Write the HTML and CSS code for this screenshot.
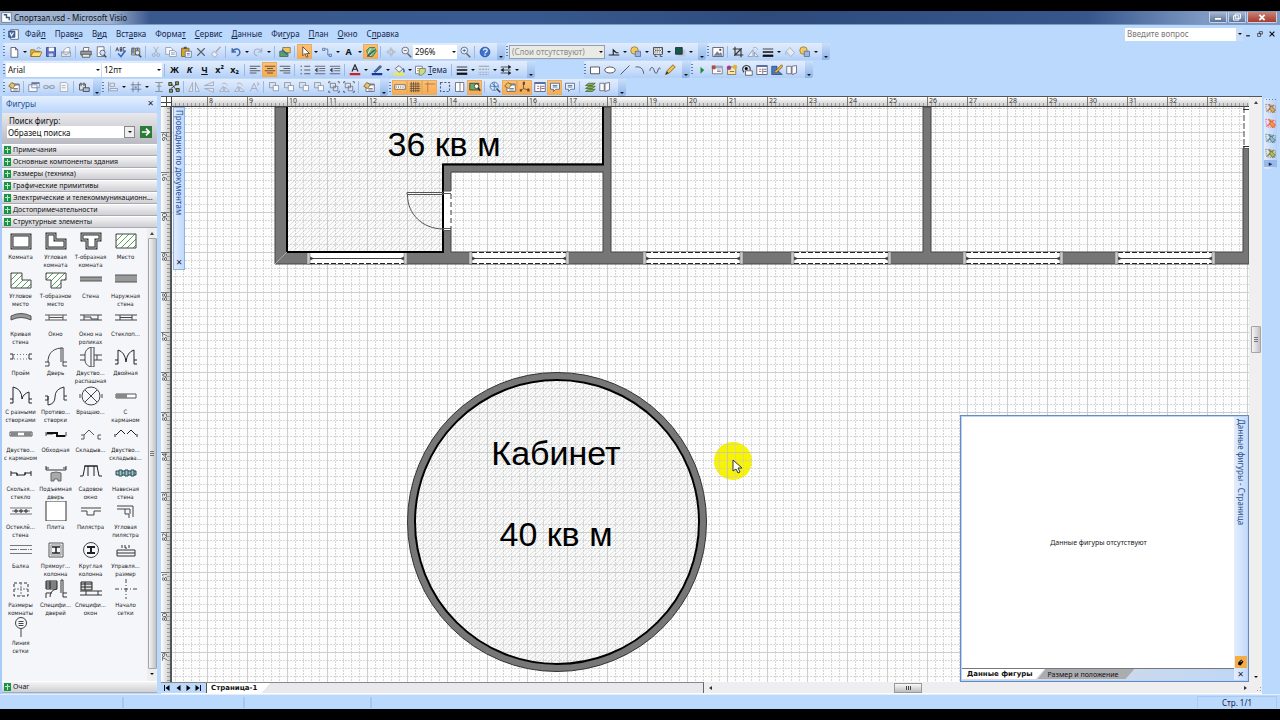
FILE: index.html
```html
<!DOCTYPE html>
<html lang="ru">
<head>
<meta charset="utf-8">
<title>Спортзал.vsd - Microsoft Visio</title>
<link rel="stylesheet" href="styles.css">
</head>
<body>
<svg class="defs" aria-hidden="true">
<defs>
<g id="new"><path d="M4 2h6l3 3v10H4z" fill="#fff" stroke="#445"/><path d="M10 2v3h3" fill="none" stroke="#445"/></g>
<g id="open"><path d="M1 14V5h5l1 2h6v7z" fill="#e8b93c" stroke="#8a6414"/><path d="M1 14l3-6h12l-3 6z" fill="#ffdc74" stroke="#8a6414"/><path d="M9 4c2-3 4-2 5 0" fill="none" stroke="#4679b8"/></g>
<g id="save"><path d="M2 2h12v12H2z" fill="#5b6fc4" stroke="#2b3a80"/><path d="M5 2h7v5H5z" fill="#fff"/><path d="M5 10h6v4H5z" fill="#cdd4ee"/></g>
<g id="mail"><path d="M5 6l4-4h4v9H5z" fill="#fff" stroke="#8890a0"/><path d="M2 8h12v6H2z" fill="#dfe5ee" stroke="#8890a0"/><path d="M2 8l6 4 6-4" fill="none" stroke="#8890a0"/></g>
<g id="print"><path d="M5 2h7l-1 5H4z" fill="#fff" stroke="#555"/><path d="M1 7h14v5H1z" fill="#9a9ca4" stroke="#444"/><path d="M3 11h10v4H3z" fill="#e8e8e8" stroke="#444"/></g>
<g id="preview"><path d="M3 1h9v13H3z" fill="#fff" stroke="#556"/><circle cx="10" cy="9" r="3.500" fill="#cfe4fa" stroke="#445"/><path d="M12 12l3 3" stroke="#444" stroke-width="2"/></g>
<g id="spell"><path d="M1 7l2-5 2 5M2 5h2M7 2v5h2V5H7h2V2zM14 2h-3v5h3" fill="none" stroke="#334"/><path d="M4 10l4 4 6-8" fill="none" stroke="#3b66c0" stroke-width="2"/></g>
<g id="research"><path d="M2 3h5v9H2zM7 3h6v9H7z" fill="#dfc89a" stroke="#665"/><path d="M4 2v8M10 2v8" stroke="#4d6fae" stroke-width="2"/><circle cx="10" cy="9" r="3" fill="#d8eafc" stroke="#445"/><path d="M12 12l3 3" stroke="#445" stroke-width="2"/></g>
<g id="cut" fill="none" stroke="#9aa4b4"><path d="M5 1l5 9M11 1l-5 9"/><circle cx="5" cy="12" r="2"/><circle cx="11" cy="12" r="2"/></g>
<g id="copy" fill="#f8fbff" stroke="#8290a6"><path d="M1 2h7l2 2v7H1z"/><path d="M6 6h6l3 2v6H6zM8 9h5M8 11h5"/></g>
<g id="paste"><path d="M2 3h10v11H2z" fill="#d9a32c" stroke="#76561a"/><path d="M5 1h4v3H5z" fill="#555"/><path d="M7 7h8v8H7z" fill="#fff" stroke="#4363a0"/><path d="M9 10h4M9 12h4" stroke="#4363a0"/></g>
<g id="del"><path d="M3 3l10 10M13 3L3 13" stroke="#555e6c" stroke-width="1.500"/></g>
<g id="brush"><path d="M14 1L8 8" stroke="#a8adb8" stroke-width="2"/><path d="M5 7l5 4-3 4-5-3z" fill="#eceff4" stroke="#9aa2b0"/></g>
<g id="undo"><path d="M3 3v5h5M3 8c3-6 11-5 10 1 0 2-2 4-4 4" fill="none" stroke="#3e68b8" stroke-width="2"/></g>
<g id="redo"><path d="M13 3v5H8M13 8C10 2 2 3 3 9c0 2 2 4 4 4" fill="none" stroke="#a4b0c6" stroke-width="1.500"/></g>
<g id="shapes"><path d="M1 7h11v7H1z" fill="#58a070" stroke="#365"/><path d="M5 2h10v7H5z" fill="#ecc754" stroke="#765"/><path d="M4 5l7 6" stroke="#2c5da8" stroke-width="2"/></g>
<g id="pointer"><path d="M5 1v12l3-3 2 5 2-1-2-4h4z" fill="#fff" stroke="#333"/></g>
<g id="conn"><path d="M2 3h3v3H2zM11 11h3v3h-3zM5 4h4v8h2" fill="none" stroke="#446a9c"/></g>
<g id="ink"><path d="M2 6l4-4h7l2 5-5 7H5z" fill="#76bd70" stroke="#356a42"/><path d="M8 3L4 10M13 3L7 13" stroke="#fff"/><path d="M3 14l10-9" stroke="#357" stroke-width="2"/></g>
<g id="pan"><path d="M8 2l2 3H6zM8 14l2-3H6zM2 8l3-2v4zM14 8l-3-2v4zM7 6h3v4H7z" fill="#d8dee8" stroke="#a8b3c3"/></g>
<g id="zout"><circle cx="7" cy="6" r="4.500" fill="#e4f2ff" stroke="#555"/><path d="M5 6h4" stroke="#a33"/><path d="M10 10l5 5" stroke="#666" stroke-width="2"/></g>
<g id="zin"><circle cx="7" cy="6" r="4.500" fill="#e4f2ff" stroke="#555"/><path d="M5 6h4M7 4v4" stroke="#235ca8"/><path d="M10 10l5 5" stroke="#666" stroke-width="2"/></g>
<g id="help"><circle cx="8" cy="8" r="6.500" fill="#3c74cd" stroke="#1d4794"/><path d="M6 6c0-3 5-3 5 0 0 2-3 2-3 4M8 11v2" fill="none" stroke="#fff" stroke-width="1.500"/></g>
<g id="jump"><path d="M1 12h14M7 12V5l4 4h3" fill="none" stroke="#222" stroke-width="1.500"/></g>
<g id="fillc"><circle cx="6" cy="6" r="5" fill="#f2c860" stroke="#967023"/><path d="M7 7h7v7H7z" fill="#9bb5dd" stroke="#496a9e"/></g>
<g id="patt"><path d="M2 2h12v9H2z" fill="#fff" stroke="#222"/><path d="M3 4h2m1 0h2m1 0h2m1 0h2M4 6h2m1 0h2m1 0h2M3 8h2m1 0h2m1 0h2m1 0h2" stroke="#222"/><path d="M4 11v3m7-3v3M4 14h3m4 0h3" stroke="#333"/></g>
<g id="shad"><path d="M5 5h10v9H5z" fill="#b9c8df"/><path d="M2 2h9v9H2z" fill="#195646" stroke="#123"/></g>
<g id="pict"><path d="M1 2h14v12H1z" fill="#fff" stroke="#445"/><path d="M2 13l5-6 3 3 2-2 2 5z" fill="#758197"/><circle cx="11" cy="5" r="1.500" fill="#445"/></g>
<g id="crop"><path d="M4 1v11h11M1 4h11v11M3 13L13 3" fill="none" stroke="#333" stroke-width="1.500"/></g>
<g id="rot" fill="#e8edf5" stroke="#8793a8"><path d="M1 14h7V5zM10 14h5l-5-6zM8 3c3-2 5-1 6 2"/></g>
<g id="lines"><path d="M1 4h14" stroke="#111"/><path d="M1 8h14" stroke="#111" stroke-width="2"/><path d="M1 13h14" stroke="#111" stroke-width="3"/></g>
<g id="bucketg"><path d="M3 7l5-5 6 7-5 5z" fill="#e8ebf0" stroke="#9ba5b5"/><path d="M3 7c-2 3 0 5 0 5" fill="none" stroke="#9ba5b5"/></g>
<g id="alignl"><path d="M1 3h14M1 6h9M1 9h14M1 12h9" stroke="#333"/></g>
<g id="alignc"><path d="M1 3h14M4 6h8M1 9h14M4 12h8" stroke="#333"/></g>
<g id="alignr"><path d="M1 3h14M6 6h9M1 9h14M6 12h9" stroke="#333"/></g>
<g id="list"><path d="M2 3h2M2 8h2M2 13h2M7 3h8M7 8h8M7 13h8" stroke="#333"/></g>
<g id="indent"><path d="M1 3h14M7 6h8M7 9h8M1 13h14M5 5v6" stroke="#445"/><path d="M1 8l3-3v6z" fill="#445"/></g>
<g id="fontc"><path d="M4 10L8 1l4 9M5 7h6" fill="none" stroke="#222" stroke-width="1.500"/><path d="M1 12h14v3H1z" fill="#d11d28"/></g>
<g id="penc"><path d="M4 10l8-8 2 2-8 7z" fill="#5274b9" stroke="#23355e"/><path d="M1 12h14v3H1z" fill="#17379b"/></g>
<g id="buckc"><path d="M3 6l5-4 5 5-5 4z" fill="#eee" stroke="#555"/><path d="M13 6c2 2 2 4 1 5" stroke="#3c6cbc" stroke-width="2" fill="none"/><path d="M1 12h14v3H1z" fill="#f7ee16"/></g>
<g id="theme"><path d="M2 3h9v10H2z" fill="#fff" stroke="#53698c"/><path d="M7 6h8v5l-5 4H7z" fill="#ccd98e" stroke="#65733c"/><path d="M4 6h3M4 9h3" stroke="#b37d21"/></g>
<g id="dash"><path d="M1 3h14" stroke="#888"/><path d="M1 7h14" stroke="#888" stroke-dasharray="3 1"/><path d="M1 11h14M1 14h14" stroke="#888" stroke-dasharray="1 1"/></g>
<g id="ends"><path d="M1 4h13M1 12h13M1 8h13" stroke="#222"/><path d="M11 1l4 3-4 3zM5 5L1 8l4 3zM11 9l4 3-4 3z" fill="#222"/></g>
<g id="rect"><path d="M2 4h12v9H2z" fill="#fff" stroke="#333"/></g>
<g id="ell"><ellipse cx="8" cy="8" rx="7" ry="4" fill="#fff" stroke="#333"/></g>
<g id="line"><path d="M2 14L14 2" stroke="#333"/></g>
<g id="arc"><path d="M2 4c8-1 10 3 11 9" fill="none" stroke="#333"/></g>
<g id="wave"><path d="M1 9c2-6 4-6 6 0s4 3 5-1 3-3 3-1" fill="none" stroke="#333"/></g>
<g id="pencil"><path d="M2 14l2-5 8-8 3 3-8 8z" fill="#efc24e" stroke="#77511e"/><path d="M2 14l2-4 2 2z" fill="#222"/></g>
<g id="play"><path d="M6 4l5 4-5 5z" fill="#238a3c"/></g>
<g id="form1"><path d="M2 3h13v10H2z" fill="#fff" stroke="#667"/><path d="M2 3h13v3H2z" fill="#96abc9"/><path d="M1 2h5v5H1z" fill="#b5473b"/><path d="M8 8h5M8 10h5" stroke="#667"/></g>
<g id="form2"><path d="M2 4h11v10H2z" fill="#f8e9ab" stroke="#786448"/><circle cx="4" cy="5" r="3" fill="#a43c8f"/><circle cx="12" cy="4" r="3" fill="#e3b333"/><path d="M5 10h6" stroke="#555"/></g>
<g id="form3"><path d="M6 9h9v6H6z" fill="#fff" stroke="#444"/><path d="M4 11C0 7 3 2 7 2s6 3 5 6" fill="none" stroke="#333" stroke-width="1.500"/><circle cx="7" cy="6" r="2"/></g>
<g id="form4"><path d="M1 2h14v12H1z" fill="#fff" stroke="#446"/><path d="M1 2h14v2H1z" fill="#506fae"/><path d="M4 7h3M4 10h3" stroke="#c33"/><path d="M9 6v7M10 7h4M10 10h4" stroke="#446"/></g>
<g id="form5"><path d="M1 3h7v5l7 6H1z" fill="#4a78c2" stroke="#27477b"/><path d="M4 11L14 1l2 2L7 12z" fill="#e9b740" stroke="#76531e"/></g>
<g id="book"><path d="M1 3h6v10H1zM8 3l6-1v10l-6 2z" fill="#f8f8ff" stroke="#556"/></g>
<g id="props"><path d="M4 4h11v10H4z" fill="#fff" stroke="#556"/><path d="M4 4h11v2H4z" fill="#70849f"/><path d="M1 7l4-5 5 3-4 5z" fill="#e7c46a" stroke="#705122"/><path d="M7 10h6M7 12h6" stroke="#556"/></g>
<g id="win"><path d="M1 5h11v9H1zM5 2h10v7H5z" fill="#f6f9ff" stroke="#6a7b99"/><path d="M5 3h10" stroke="#6a7b99" stroke-width="2"/></g>
<g id="link" fill="none" stroke="#95a0b2" stroke-width="1.500"><ellipse cx="4" cy="8" rx="3" ry="2"/><ellipse cx="12" cy="8" rx="3" ry="2"/><path d="M6 8h4"/></g>
<g id="doc"><path d="M3 2h8l2 2v10H3z" fill="#f3f5f9" stroke="#9aa4b4"/><path d="M5 6h5M5 9h5" stroke="#9aa4b4"/></g>
<g id="db"><path d="M2 4h8v8H2z" fill="#dce4ef" stroke="#333"/><path d="M4 2v5m4-5v5" stroke="#333"/><path d="M7 9h8v5H7z" fill="#aec1dc" stroke="#333"/></g>
<g id="al"><path d="M2 1v14M4 3h6v4H4zM4 10h10v3H4z" fill="#e9edf5" stroke="#8390a6"/></g>
<g id="dist"><path d="M4 1v14M11 1v14M1 5h14M1 11h14" stroke="#5f6f88"/><path d="M6 7h3v3H6z" fill="#8393ac"/></g>
<g id="tee"><path d="M3 2h10M8 2v12M3 14h10M5 7h6" fill="none" stroke="#8792a3" stroke-width="1.500"/></g>
<g id="lay"><path d="M1 2h4v4H1zM10 1h4v4h-4zM2 11h4v4H2zM11 10h4v4h-4z" fill="#84a651" stroke="#222"/><path d="M5 4l6 8M4 10l8-6" stroke="#222"/></g>
<g id="flip" fill="#e0e5ee" stroke="#98a2b2"><path d="M6 2v12H1zM10 2v12h5z"/></g>
<g id="flipv" fill="#e0e5ee" stroke="#98a2b2"><path d="M2 6h12V1zM2 10h12v5z"/></g>
<g id="turn" fill="#e0e5ee" stroke="#98a2b2"><path d="M2 14h5V7zM9 14h6L9 8zM5 4c3-2 6-1 8 2"/></g>
<g id="txt" fill="none" stroke="#98a2b2"><path d="M3 14L8 3l5 11M5 10h6M12 2l3 2-3 2"/></g>
<g id="order"><path d="M2 2h8v7H2z" fill="#dbe2ec" stroke="#7e8da4"/><path d="M7 6h7v7H7z" fill="#fafcff" stroke="#7e8da4"/></g>
<g id="group"><path d="M3 3h7v6H3zM7 7h6v6H7z" fill="#dde4ee" stroke="#5f6c80"/><path d="M1 1h2M1 1v2M13 1h2M15 1v2M1 13v2M1 15h2M13 15h2M15 13v2" stroke="#333"/></g>
<g id="rul"><path d="M1 5h14v6H1z" fill="#fff" stroke="#555"/><path d="M3 7v2m3-2v2m3-2v2m3-2v2" stroke="#555"/></g>
<g id="grid"><path d="M3 1v14M6 1v14M9 1v14M12 1v14M1 4h14M1 7h14M1 10h14M1 13h14" stroke="#554b3e"/></g>
<g id="guide"><path d="M1 4h14M5 1v14" stroke="#9a6950"/></g>
<g id="bound"><path d="M2 2h12v12H2z" fill="none" stroke="#53657e" stroke-width="1.500" stroke-dasharray="3 2"/></g>
<g id="breaks"><path d="M2 2h11v12H2zM8 2v12" fill="#fff" stroke="#556"/></g>
<g id="sfind"><path d="M1 3h12v9H1z" fill="#6caa68" stroke="#333"/><circle cx="10" cy="7" r="3" fill="#fff" stroke="#333"/><path d="M12 9l3 4" stroke="#333" stroke-width="2"/></g>
<g id="globe"><circle cx="7" cy="7" r="5.500" fill="#deebfc" stroke="#345f9e"/><path d="M2 7h10M7 2v10M4 3c5 4 5 4 6 8" stroke="#345f9e" fill="none"/><path d="M11 11l4 4" stroke="#345" stroke-width="2"/></g>
<g id="snap"><path d="M6 2v8l8 3M6 10l-4 3" fill="none" stroke="#444"/><path d="M5 1h3v4H5zM11 10h3v4h-3zM1 11h3v3H1z" fill="#5c4a3c"/></g>
<g id="callout"><path d="M2 3h12v8H9l-3 3v-3H2z" fill="#edf4ff" stroke="#3e5981"/><path d="M5 6h6M5 8h6" stroke="#3e5981"/></g>
<g id="layers"><path d="M2 14l4-3h9l-4 3zM2 10l4-3h9l-4 3zM2 6l4-3h9l-4 3z" fill="#80af57" stroke="#476427"/></g>
<g id="wand"><path d="M1 3l13 2-1 9-11-1z" fill="none" stroke="#b76d56" stroke-dasharray="2 1"/><path d="M3 12l9-8M5 3l7 10" stroke="#af804b" stroke-width="2"/><path d="M8 5l6 6-4 3-4-5z" fill="#d9ae5b" stroke="#77603b"/></g>
<pattern id="gridlines" width="40" height="40" x="207" y="132" patternUnits="userSpaceOnUse">
<path d="M8.500 0v40M16.500 0v40M24.500 0v40M32.500 0v40M0 8.500h40M0 16.500h40M0 24.500h40M0 32.500h40" stroke="#cbcbcb" stroke-dasharray="2 1"/>
<path d="M.5 0v40M0 .5h40" stroke="#c2c2c2"/>
</pattern>
<pattern id="hatch" width="5" height="5" patternUnits="userSpaceOnUse"><path d="M-1 6L6-1" stroke="#dfe3df" fill="none"/></pattern>
<pattern id="gh" width="6" height="6" patternUnits="userSpaceOnUse"><path d="M-1 7L7-1" stroke="#57a35a" fill="none"/></pattern>
<g id="window"><path d="M0 252h100v12H0z" fill="#fff"/><path d="M0 252h3v12H0zM97 252h3v12h-3z" fill="#ccc" stroke="#666" stroke-width=".5"/><path d="M3 252.500h94M3 263.500h94" stroke="#222" stroke-dasharray="5 2"/><path d="M3 258.500h94" stroke="#444"/><path d="M3 257l3 1.500-3 1.500M97 257l-3 1.500 3 1.500" fill="none" stroke="#333"/></g>
</defs>
</svg>

<header class="title">
<svg class="logo" viewBox="0 0 16 16"><path d="M1 1h14v14H1z" fill="#fff" stroke="#567"/><path d="M4 4h4v4h4v4" fill="none" stroke="#358" stroke-width="2"/></svg>
<h1>Спортзал.vsd - Microsoft Visio</h1>
<div class="wbtns">
<button aria-label="Свернуть"><svg viewBox="0 0 16 10"><path d="M4 5h8v3H4z" fill="#fff" stroke="#345" stroke-width=".5"/></svg></button>
<button aria-label="Восстановить"><svg viewBox="0 0 16 10"><path d="M6 1h6v5H6zM4 3h6v5H4z" fill="#8a99b5" stroke="#fff"/></svg></button>
<button class="close" aria-label="Закрыть"><svg viewBox="0 0 16 10"><path d="M5 2l6 6M11 2L5 8" stroke="#fff" stroke-width="2"/></svg></button>
</div>
</header>

<nav class="menu">
<i class="grip"></i>
<svg class="logo" viewBox="0 0 16 16"><path d="M4 1h11v14H4z" fill="#fff" stroke="#346"/><path d="M1 3h9v9H1z" fill="#4a6eae" stroke="#235"/><path d="M3 5l2 5 3-5" fill="none" stroke="#fff" stroke-width="1.500"/></svg>
<a href="#">Фай<u>л</u></a><a href="#">Прав<u>к</u>а</a><a href="#">В<u>и</u>д</a><a href="#">Вст<u>а</u>вка</a><a href="#">Форма<u>т</u></a><a href="#"><u>С</u>ервис</a><a href="#"><u>Д</u>анные</a><a href="#">Фи<u>г</u>ура</a><a href="#"><u>П</u>лан</a><a href="#"><u>О</u>кно</a><a href="#">С<u>п</u>равка</a>
<div class="ask"><input aria-label="Вопрос" placeholder="Введите вопрос"><button class="a" aria-label="Список"></button></div>
<div class="mdi"><button aria-label="Свернуть окно"><svg viewBox="0 0 10 10"><path d="M2 8h6" stroke="#111" stroke-width="2"/></svg></button><button aria-label="Восстановить окно"><svg viewBox="0 0 10 10"><path d="M4 1h5v4H4zM1 4h5v5H1z" fill="#c5dcfa" stroke="#111"/></svg></button><button aria-label="Закрыть окно"><svg viewBox="0 0 10 10"><path d="M1 1l8 8M9 1L1 9" stroke="#111" stroke-width="2"/></svg></button></div>
</nav>

<div class="bars">
<div class="row">
<div class="bar w1"><i class="grip"></i>
<button class="b"><svg viewBox="0 0 16 16"><use href="#new"/></svg></button><button class="a"></button><button class="b"><svg viewBox="0 0 16 16"><use href="#open"/></svg></button><button class="b"><svg viewBox="0 0 16 16"><use href="#save"/></svg></button><button class="b"><svg viewBox="0 0 16 16"><use href="#mail"/></svg></button><i class="s"></i><button class="b"><svg viewBox="0 0 16 16"><use href="#print"/></svg></button><button class="b"><svg viewBox="0 0 16 16"><use href="#preview"/></svg></button><i class="s"></i><button class="b"><svg viewBox="0 0 16 16"><use href="#spell"/></svg></button><button class="b"><svg viewBox="0 0 16 16"><use href="#research"/></svg></button><i class="s"></i><button class="b"><svg viewBox="0 0 16 16"><use href="#cut"/></svg></button><button class="b"><svg viewBox="0 0 16 16"><use href="#copy"/></svg></button><button class="b"><svg viewBox="0 0 16 16"><use href="#paste"/></svg></button><button class="b"><svg viewBox="0 0 16 16"><use href="#del"/></svg></button><button class="b"><svg viewBox="0 0 16 16"><use href="#brush"/></svg></button><i class="s"></i><button class="b"><svg viewBox="0 0 16 16"><use href="#undo"/></svg></button><button class="a"></button><button class="b"><svg viewBox="0 0 16 16"><use href="#redo"/></svg></button><button class="a"></button><i class="s"></i><button class="b"><svg viewBox="0 0 16 16"><use href="#shapes"/></svg></button><i class="s"></i><button class="b on"><svg viewBox="0 0 16 16"><use href="#pointer"/></svg></button><button class="a"></button><button class="b"><svg viewBox="0 0 16 16"><use href="#conn"/></svg></button><button class="a"></button><button class="b t">A</button><button class="a"></button><button class="b on"><svg viewBox="0 0 16 16"><use href="#ink"/></svg></button><i class="s"></i><button class="b"><svg viewBox="0 0 16 16"><use href="#pan"/></svg></button><button class="b"><svg viewBox="0 0 16 16"><use href="#zout"/></svg></button><div class="combo zoom"><input aria-label="Масштаб" value="296%"><button class="a"></button></div><button class="b"><svg viewBox="0 0 16 16"><use href="#zin"/></svg></button><i class="s"></i><button class="b"><svg viewBox="0 0 16 16"><use href="#help"/></svg></button><button class="more"></button></div>
<div class="bar w2"><i class="grip"></i><div class="combo layer"><input aria-label="Слой" value="(Слои отсутствуют)" disabled><button class="a" disabled></button></div><button class="b"><svg viewBox="0 0 16 16"><use href="#jump"/></svg></button><button class="a"></button><button class="b"><svg viewBox="0 0 16 16"><use href="#fillc"/></svg></button><button class="a"></button><button class="b"><svg viewBox="0 0 16 16"><use href="#patt"/></svg></button><button class="a"></button><button class="b"><svg viewBox="0 0 16 16"><use href="#shad"/></svg></button><button class="a"></button><button class="more"></button></div>
<div class="bar w3"><i class="grip"></i><button class="b"><svg viewBox="0 0 16 16"><use href="#pict"/></svg></button><i class="s"></i><button class="b"><svg viewBox="0 0 16 16"><use href="#crop"/></svg></button><button class="b"><svg viewBox="0 0 16 16"><use href="#rot"/></svg></button><button class="b"><svg viewBox="0 0 16 16"><use href="#lines"/></svg></button><button class="a"></button><button class="b"><svg viewBox="0 0 16 16"><use href="#bucketg"/></svg></button><button class="b"><svg viewBox="0 0 16 16"><use href="#fillc"/></svg></button><button class="a"></button><button class="more"></button></div>
</div>
<div class="row">
<div class="bar w4"><i class="grip"></i><div class="combo font"><input aria-label="Шрифт" value="Arial"><button class="a"></button></div><div class="combo size"><input aria-label="Размер шрифта" value="12пт"><button class="a"></button></div><i class="s"></i><button class="b t">Ж</button><button class="b t it">К</button><button class="b t un">Ч</button><button class="b t">x²</button><button class="b t">x₂</button><i class="s"></i><button class="b"><svg viewBox="0 0 16 16"><use href="#alignl"/></svg></button><button class="b on"><svg viewBox="0 0 16 16"><use href="#alignc"/></svg></button><button class="b"><svg viewBox="0 0 16 16"><use href="#alignr"/></svg></button><i class="s"></i><button class="b"><svg viewBox="0 0 16 16"><use href="#list"/></svg></button><button class="b"><svg viewBox="0 0 16 16"><use href="#indent"/></svg></button><button class="b"><svg viewBox="0 0 16 16"><use href="#indent"/></svg></button><i class="s"></i><button class="b"><svg viewBox="0 0 16 16"><use href="#fontc"/></svg></button><button class="a"></button><button class="b"><svg viewBox="0 0 16 16"><use href="#penc"/></svg></button><button class="a"></button><button class="b"><svg viewBox="0 0 16 16"><use href="#buckc"/></svg></button><button class="a"></button><button class="themebtn"><svg viewBox="0 0 16 16"><use href="#theme"/></svg><span><u>Т</u>ема</span></button><i class="s"></i><button class="b"><svg viewBox="0 0 16 16"><use href="#lines"/></svg></button><button class="a"></button><button class="b"><svg viewBox="0 0 16 16"><use href="#dash"/></svg></button><button class="a"></button><button class="b"><svg viewBox="0 0 16 16"><use href="#ends"/></svg></button><button class="a"></button><button class="more"></button></div>
<div class="bar w5"><i class="grip"></i><button class="b"><svg viewBox="0 0 16 16"><use href="#rect"/></svg></button><button class="b"><svg viewBox="0 0 16 16"><use href="#ell"/></svg></button><button class="b"><svg viewBox="0 0 16 16"><use href="#line"/></svg></button><button class="b"><svg viewBox="0 0 16 16"><use href="#arc"/></svg></button><button class="b"><svg viewBox="0 0 16 16"><use href="#wave"/></svg></button><button class="b"><svg viewBox="0 0 16 16"><use href="#pencil"/></svg></button><button class="more"></button></div>
<div class="bar w6"><i class="grip"></i><button class="b"><svg viewBox="0 0 16 16"><use href="#play"/></svg></button><button class="b"><svg viewBox="0 0 16 16"><use href="#form1"/></svg></button><button class="b"><svg viewBox="0 0 16 16"><use href="#form2"/></svg></button><button class="b"><svg viewBox="0 0 16 16"><use href="#form3"/></svg></button><button class="b"><svg viewBox="0 0 16 16"><use href="#form4"/></svg></button><button class="b"><svg viewBox="0 0 16 16"><use href="#form5"/></svg></button><button class="b"><svg viewBox="0 0 16 16"><use href="#book"/></svg></button><button class="more"></button></div>
</div>
<div class="row">
<div class="bar w7"><i class="grip"></i><button class="b"><svg viewBox="0 0 16 16"><use href="#props"/></svg></button><i class="s"></i><button class="b"><svg viewBox="0 0 16 16"><use href="#win"/></svg></button><button class="b"><svg viewBox="0 0 16 16"><use href="#link"/></svg></button><button class="b"><svg viewBox="0 0 16 16"><use href="#doc"/></svg></button><i class="s"></i><button class="b"><svg viewBox="0 0 16 16"><use href="#db"/></svg></button><button class="more"></button></div>
<div class="bar w8"><i class="grip"></i><button class="b"><svg viewBox="0 0 16 16"><use href="#al"/></svg></button><button class="a"></button><button class="b"><svg viewBox="0 0 16 16"><use href="#dist"/></svg></button><button class="a"></button><button class="b"><svg viewBox="0 0 16 16"><use href="#tee"/></svg></button><button class="b"><svg viewBox="0 0 16 16"><use href="#lay"/></svg></button><i class="s"></i><button class="b"><svg viewBox="0 0 16 16"><use href="#flip"/></svg></button><button class="b"><svg viewBox="0 0 16 16"><use href="#flipv"/></svg></button><button class="b"><svg viewBox="0 0 16 16"><use href="#turn"/></svg></button><button class="b"><svg viewBox="0 0 16 16"><use href="#turn"/></svg></button><button class="b"><svg viewBox="0 0 16 16"><use href="#txt"/></svg></button><i class="s"></i><button class="b"><svg viewBox="0 0 16 16"><use href="#order"/></svg></button><button class="b"><svg viewBox="0 0 16 16"><use href="#order"/></svg></button><button class="b"><svg viewBox="0 0 16 16"><use href="#order"/></svg></button><button class="b"><svg viewBox="0 0 16 16"><use href="#order"/></svg></button><button class="b"><svg viewBox="0 0 16 16"><use href="#group"/></svg></button><button class="b"><svg viewBox="0 0 16 16"><use href="#group"/></svg></button><i class="s"></i><button class="b"><svg viewBox="0 0 16 16"><use href="#props"/></svg></button><button class="more"></button></div>
<div class="bar w9"><i class="grip"></i><button class="b on"><svg viewBox="0 0 16 16"><use href="#rul"/></svg></button><button class="b on"><svg viewBox="0 0 16 16"><use href="#grid"/></svg></button><button class="b on"><svg viewBox="0 0 16 16"><use href="#guide"/></svg></button><button class="b"><svg viewBox="0 0 16 16"><use href="#bound"/></svg></button><button class="b"><svg viewBox="0 0 16 16"><use href="#breaks"/></svg></button><button class="b on"><svg viewBox="0 0 16 16"><use href="#sfind"/></svg></button><i class="s"></i><button class="b"><svg viewBox="0 0 16 16"><use href="#globe"/></svg></button><button class="b on"><svg viewBox="0 0 16 16"><use href="#props"/></svg></button><button class="b on"><svg viewBox="0 0 16 16"><use href="#snap"/></svg></button><button class="b"><svg viewBox="0 0 16 16"><use href="#form4"/></svg></button><button class="b on"><svg viewBox="0 0 16 16"><use href="#callout"/></svg></button><button class="b"><svg viewBox="0 0 16 16"><use href="#callout"/></svg></button><i class="s"></i><button class="b"><svg viewBox="0 0 16 16"><use href="#layers"/></svg></button><button class="b"><svg viewBox="0 0 16 16"><use href="#book"/></svg></button><button class="more"></button></div>
</div>
</div>

<main class="work">
<aside class="panel">
<div class="phead"><h2>Фигуры</h2><button class="x" aria-label="Закрыть">✕</button></div>
<form class="search"><label for="q">Поиск фигур:</label><div class="srow"><input id="q" value="Образец поиска"><button type="button" class="drop" aria-label="Список"></button><button type="button" class="go" aria-label="Найти"><svg viewBox="0 0 12 12"><path d="M1 6h9M6 2l4 4-4 4" fill="none" stroke="#fff" stroke-width="2"/></svg></button></div></form>
<button class="st">Примечания</button>
<button class="st">Основные компоненты здания</button>
<button class="st">Размеры (техника)</button>
<button class="st">Графические примитивы</button>
<button class="st">Электрические и телекоммуникационн...</button>
<button class="st">Достопримечательности</button>
<button class="st">Структурные элементы</button>
<div class="stencil">
<ul class="shapes">
<li><svg viewBox="0 0 24 20"><path d="M3 4h18v13H3z" fill="#fff" stroke="#333" stroke-width="3"/><path d="M3 4h18v13H3z" fill="none" stroke="#bbb"/></svg>Комната</li>
<li><svg viewBox="0 0 24 20"><path d="M3 3h8v6h10v8H3z" fill="#fff" stroke="#333" stroke-width="3"/><path d="M3 3h8v6h10v8H3z" fill="none" stroke="#bbb"/></svg>Угловая<br>комната</li>
<li><svg viewBox="0 0 24 20"><path d="M3 3h18v6h-4v8H8V9H3z" fill="#fff" stroke="#333" stroke-width="3"/><path d="M3 3h18v6h-4v8H8V9H3z" fill="none" stroke="#bbb"/></svg>Т-образная<br>комната</li>
<li><svg viewBox="0 0 24 20"><path d="M2 3h20v14H2z" fill="#fff"/><path d="M2 3h20v14H2z" fill="url(#gh)" stroke="#444"/></svg>Место</li>
<li><svg viewBox="0 0 24 20"><path d="M2 3h11v7h9v8H2z" fill="#fff"/><path d="M2 3h11v7h9v8H2z" fill="url(#gh)" stroke="#444"/></svg>Угловое<br>место</li>
<li><svg viewBox="0 0 24 20"><path d="M2 3h20v7h-5v8H7v-8H2z" fill="#fff"/><path d="M2 3h20v7h-5v8H7v-8H2z" fill="url(#gh)" stroke="#444"/></svg>Т-образное<br>место</li>
<li><svg viewBox="0 0 24 20"><path d="M1 7h22v4H1z" fill="#999"/><path d="M1 7h22M1 11h22" stroke="#555"/></svg>Стена</li>
<li><svg viewBox="0 0 24 20"><path d="M1 5h22v7H1z" fill="#999"/><path d="M1 5h22M1 12h22" stroke="#555"/></svg>Наружная<br>стена</li>
<li><svg viewBox="0 0 24 20"><path d="M2 8q10-5 20 0v4q-10-5-20 0z" fill="#999" stroke="#555"/></svg>Кривая<br>стена</li>
<li><svg viewBox="0 0 24 20"><path d="M1 7h22M1 12h22M5 7v5M19 7v5M5 9.500h14" fill="none" stroke="#555"/></svg>Окно</li>
<li><svg viewBox="0 0 24 20"><path d="M1 7h22M1 12h22M5 7v5M19 7v5M5 9h7v2h7" fill="none" stroke="#444"/></svg>Окно на<br>роликах</li>
<li><svg viewBox="0 0 24 20"><path d="M1 7h22M1 12h22M6 7v5M18 7v5M6 9.500h12" fill="none" stroke="#444"/></svg>Стеклоп...</li>
<li><svg viewBox="0 0 24 20"><path d="M1 7h3v5H1M23 7h-3v5h3" fill="none" stroke="#333"/><path d="M5 7.500h14M5 12h14" stroke="#777" stroke-dasharray="1 2"/></svg>Проём</li>
<li><svg viewBox="0 0 24 20"><path d="M17 15V1h2v14M17 1C7 2 4 8 4 15M1 15h4v4H1M23 15h-4v4h4" fill="none" stroke="#444"/></svg>Дверь</li>
<li><svg viewBox="0 0 24 20"><path d="M12 0v20h3V0zM12 0C7 2 6 5 6 8m0 5c0 3 2 6 6 7M1 8h5v5H1M23 8h-5v5h5M15 8h3M15 13h3" fill="none" stroke="#444"/></svg>Двуство...<br>распашная</li>
<li><svg viewBox="0 0 24 20"><path d="M1 13h3v4H1M23 13h-3v4h3M4 13V3q7 2 8 12M20 13V3q-7 2-8 12" fill="none" stroke="#222"/></svg>Двойная</li>
<li><svg viewBox="0 0 24 20"><path d="M1 13h3v4H1M23 13h-3v4h3M4 13V1q9 2 9 12M20 13V6q-6 2-7 7" fill="none" stroke="#222"/></svg>С разными<br>створками</li>
<li><svg viewBox="0 0 24 20"><path d="M1 10h3v4H1M23 10h-3v4h3M20 10V1q-9 2-9 10M4 10v9q7-1 7-8" fill="none" stroke="#333"/></svg>Противо...<br>створки</li>
<li><svg viewBox="0 0 24 20"><circle cx="12" cy="10" r="9" fill="none" stroke="#444"/><path d="M6 4l12 12M18 4L6 16M1 8v4M23 8v4" stroke="#444"/></svg>Вращаю...</li>
<li><svg viewBox="0 0 24 20"><path d="M2 8h20v4H2z" fill="#fff" stroke="#555"/><path d="M2 8h11v4H2z" fill="#888"/></svg>С<br>карманом</li>
<li><svg viewBox="0 0 24 20"><path d="M1 8h22v4H1z" fill="#fff" stroke="#555"/><path d="M2 8h7v4H2zM15 8h7v4h-7z" fill="#888"/></svg>Двуство...<br>с карманом</li>
<li><svg viewBox="0 0 24 20"><path d="M2 8v4M22 8v4M2 10h7M15 12h7" fill="none" stroke="#444"/><path d="M3 9h10v3h8" fill="none" stroke="#111" stroke-width="2"/></svg>Обходная</li>
<li><svg viewBox="0 0 24 20"><path d="M2 11h3v4H2M22 11h-3v4h3M5 11l5-5 5 5" fill="none" stroke="#555"/></svg>Складыв...</li>
<li><svg viewBox="0 0 24 20"><path d="M2 11l5-5 4 4M13 10l4-4 5 5M1 10v3M23 10v3" fill="none" stroke="#222"/></svg>Двуство...<br>складыва...</li>
<li><svg viewBox="0 0 24 20"><path d="M2 8v5M22 8v5M2 10h6v2h8v-2h6M8 10v3M16 9v3" fill="none" stroke="#222"/></svg>Скользя...<br>стекло</li>
<li><svg viewBox="0 0 24 20"><path d="M2 3v4h20V3M2 5h3M19 5h3" fill="none" stroke="#333"/><path d="M7 10q5-2 10 0v8h-3v-2h-4v2H7z" fill="#aaa" stroke="#666"/></svg>Подъемная<br>дверь</li>
<li><svg viewBox="0 0 24 20"><path d="M1 13h3L6 3h12l2 10h3M5 3h14M9 3v10M15 3v10" fill="none" stroke="#222"/></svg>Садовое<br>окно</li>
<li><svg viewBox="0 0 24 20"><path d="M2 8h20v4H2z" fill="#8fc6c1" stroke="#345"/><path d="M5 7h3v6H5zM11 7h3v6h-3zM17 7h3v6h-3z" fill="#9cc" stroke="#345"/></svg>Навесная<br>стена</li>
<li><svg viewBox="0 0 24 20"><path d="M1 7h22M1 13h22M3 10h18" stroke="#777"/><path d="M6 9h2v2H6zM11 9h2v2h-2zM16 9h2v2h-2z" fill="#fff" stroke="#222"/></svg>Остеклё...<br>стена</li>
<li><svg viewBox="0 0 24 20"><path d="M2 0h20v20H2z" fill="#fff" stroke="#333"/></svg>Плита</li>
<li><svg viewBox="0 0 24 20"><path d="M2 7h20M2 10h6v4h7v-4h7" fill="none" stroke="#444"/></svg>Пилястра</li>
<li><svg viewBox="0 0 24 20"><path d="M3 5h16v11M3 8h8v5h4v4M11 8h5v5" fill="none" stroke="#444"/></svg>Угловая<br>пилястра</li>
<li><svg viewBox="0 0 24 20"><path d="M1 5.500h22M1 13.500h22" stroke="#777"/><path d="M1 9.500h22" stroke="#777" stroke-dasharray="7 1 1 1"/></svg>Балка</li>
<li><svg viewBox="0 0 24 20"><path d="M5 3h14v14H5z" fill="none" stroke="#555"/><path d="M7 5h10v10H7z" fill="none" stroke="#888"/><path d="M8 7h8M8 13h8M12 7v6" stroke="#222" stroke-width="1.500"/></svg>Прямоуг...<br>колонна</li>
<li><svg viewBox="0 0 24 20"><circle cx="12" cy="10" r="7.500" fill="none" stroke="#444"/><path d="M8 7h8M8 13h8M12 7v6" fill="none" stroke="#222" stroke-width="2"/></svg>Круглая<br>колонна</li>
<li><svg viewBox="0 0 24 20"><path d="M3 10h18v6H3zM3 13h18" fill="none" stroke="#333"/><path d="M8 5v3m3-3v3h2m2-3v3" stroke="#333" fill="none"/></svg>Управля...<br>размер</li>
<li><svg viewBox="0 0 24 20"><path d="M5 4h14v13H5z" fill="none" stroke="#333" stroke-dasharray="3 2"/><path d="M12 4v13M5 10h14" stroke="#777" stroke-dasharray="2 1"/></svg>Размеры<br>комнаты</li>
<li><svg viewBox="0 0 24 20"><path d="M2 2h11v8H2zM2 4h11M2 6h11M2 8h11M6 2v8" fill="#ddd" stroke="#222"/><path d="M17 14V1h2v13M2 19v-5h6M13 10q-7 1-7 8M23 14h-4v4h4" fill="none" stroke="#333"/></svg>Специфи...<br>дверей</li>
<li><svg viewBox="0 0 24 20"><path d="M2 3h11v8H2zM2 5h11M2 8h11M6 3v8" fill="#ddd" stroke="#222"/><path d="M1 12h22M1 16h22M7 12v4M19 12v4" stroke="#333"/></svg>Специфи...<br>окон</li>
<li><svg viewBox="0 0 24 20"><path d="M12 0v20M1 10h22" stroke="#444" stroke-dasharray="4 2 1 2"/></svg>Начало<br>сетки</li>
<li><svg viewBox="0 0 24 20"><circle cx="12" cy="6" r="5.500" fill="none" stroke="#444"/><path d="M12 12v8M9.500 4.500h5M9.500 6.500h5M9.500 8.500h5" stroke="#444"/></svg>Линия<br>сетки</li>
</ul>
<div class="vscroll"><button class="up" aria-label="Вверх"></button><i class="thumb"></i><button class="down" aria-label="Вниз"></button></div>
</div>
<button class="st">Очаг</button>
</aside>

<section class="doc">
<div class="corner"></div>
<div class="hruler"><span>8</span><span>9</span><span>10</span><span>11</span><span>12</span><span>13</span><span>14</span><span>15</span><span>16</span><span>17</span><span>18</span><span>19</span><span>20</span><span>21</span><span>22</span><span>23</span><span>24</span><span>25</span><span>26</span><span>27</span><span>28</span><span>29</span><span>30</span><span>31</span><span>32</span><span>33</span></div>
<div class="vruler"><span>92</span><span>91</span><span>90</span><span>89</span><span>88</span><span>87</span><span>86</span><span>85</span><span>84</span><span>83</span><span>82</span><span>81</span><span>80</span><span>79</span></div>
<div class="canvas">
<svg class="draw">
<g transform="translate(-172 -107)">
<rect x="172" y="107" width="4000" height="4000" fill="#fdfdfd"/>
<path d="M287 107h316v57H443v88H287z" fill="#f9faf9"/>
<circle cx="557" cy="522" r="142" fill="#f7f8f7"/>
<path d="M287 107h316v57H443v88H287z" fill="url(#hatch)"/>
<circle cx="557" cy="522" r="142" fill="url(#hatch)"/>
<circle cx="733" cy="461" r="19" fill="#f8f400"/>
<rect x="172" y="107" width="4000" height="4000" fill="url(#gridlines)" opacity=".8"/>
<path d="M275 107h12v145h156v-88h160v-57h8v145h312V107h8v145h312V148h6v116H275zM451 172v80h152v-80z" fill="#767676" stroke="#444" fill-rule="evenodd"/>
<path d="M287 107V252H443V164.500H603V107" fill="none" stroke="#000" stroke-width="2"/>
<path d="M275 264l12-12" stroke="#aaa"/>
<use href="#window" x="307"/><use href="#window" x="469"/><use href="#window" x="643"/><use href="#window" x="791"/><use href="#window" x="963"/><use href="#window" x="1115"/>
<path d="M287 252h156" stroke="#000" stroke-width="2"/>
<path d="M444 191h8v39h-8z" fill="#fff"/><path d="M443 191h8M443 193.500h8M443 228.500h8M443 230.500h8" stroke="#555"/><path d="M451 194v36" stroke="#333" stroke-dasharray="5 3"/>
<path d="M407 192.500h36v2h-36zM407.500 195c0 19 15 34 36 34" fill="none" stroke="#555"/>
<path d="M1244 107h5v41h-5z" fill="#fff"/><path d="M1244 107v41" stroke="#444" stroke-dasharray="6 2"/><path d="M1243 109.500h6M1243 146.500h6" stroke="#333"/>
<circle cx="557" cy="522" r="146" fill="none" stroke="#777" stroke-width="7"/><circle cx="557" cy="522" r="149.500" fill="none" stroke="#333"/><circle cx="557" cy="522" r="142" fill="none" stroke="#000" stroke-width="2"/>
<text class="big" x="444" y="156">36 кв м</text><text class="big" x="556" y="465">Кабинет</text><text class="big" x="556" y="546">40 кв м</text>
<path d="M733 460v11l3-2 2 4 2-1-2-4h4z" fill="#fff" stroke="#333"/>
</g>
</svg>
<div class="explorer"><span>Проводник по документам</span><button class="x" aria-label="Закрыть">✕</button></div>
<section class="data">
<div class="dbody"><p>Данные фигуры отсутствуют</p></div>
<div class="dtabs"><button class="tab cur">Данные фигуры</button><button class="tab">Размер и положение</button></div>
<div class="dside"><h2>Данные фигуры - Страница</h2><button class="pin" aria-label="Закрепить"><svg viewBox="0 0 12 12"><path d="M3 6l4-4 3 3-4 5-3-1z"/><path d="M6 5l2-1" stroke="#fff"/></svg></button><button class="x" aria-label="Закрыть">✕</button></div>
</section>
</div>
<div class="vscroll vs2"><button class="up" aria-label="Вверх"></button><i class="thumb"></i><button class="down" aria-label="Вниз"></button></div>
<div class="foot">
<div class="pages"><svg class="navs" viewBox="0 0 44 10"><path d="M3 2v6M39 2v6" stroke="#111"/><path d="M8 2v6L4 5zM19 2v6l-4-3zM25 2v6l4-3zM34 2v6l4-3z"/></svg><button class="tab cur">Страница-1</button></div>
<div class="hscroll"><button class="left" aria-label="Влево"></button><i class="hthumb"></i><button class="right" aria-label="Вправо"></button></div>
<i class="size-grip"></i>
</div>
</section>
<div class="rail"><div class="railbar"><i class="hgrip"></i><button class="b"><svg viewBox="0 0 16 16"><use href="#wand"/></svg></button><button class="b red"><svg viewBox="0 0 16 16"><use href="#wand"/></svg></button><button class="b blue"><svg viewBox="0 0 16 16"><use href="#wand"/></svg></button><button class="b green"><svg viewBox="0 0 16 16"><use href="#wand"/></svg></button><button class="rmore">▸</button></div></div>
</main>
<footer class="status"><i class="c1"></i><i class="c2"></i><i class="c3"></i><span>Стр. 1/1</span></footer>
</body>
</html>
```
FILE: styles.css
```css
* { box-sizing: border-box; }
body { margin: 0; height: 100vh; display: flex; flex-direction: column; background: #bbd8fd; border-top: 11px solid #000; border-bottom: 11px solid #000; font-family: "Noto Sans", "DejaVu Sans", sans-serif; font-size: 8px; line-height: 10px; color: #14264a; overflow: hidden; }
button, input { font: inherit; color: inherit; padding: 0; margin: 0; border: 0; background: none; }
button { display: flex; align-items: center; justify-content: center; flex: none; }
h1, h2, p, ul { margin: 0; padding: 0; font: inherit; list-style: none; }
a { color: inherit; text-decoration: none; }
i { display: block; flex: none; }
svg { display: block; flex: none; }
.defs { position: absolute; width: 0; height: 0; }
.logo { width: 11px; height: 11px; }

.title { flex: none; height: 14px; display: flex; align-items: center; gap: 2px; padding-left: 1px; background: linear-gradient(90deg, #9fb2d0 0, #9fb2d0 110px, #39588d 150px, #385a90 40%, #2f4b7c 60%, #36568c 85%, #7d99c3 94%); border-bottom: 1px solid #7d9cc6; }
.title h1 { flex: 1; color: #0a1220; }
.wbtns { display: flex; align-self: flex-start; padding: 1px 3px 0 0; gap: 1px; }
.wbtns button { width: 18px; height: 11px; background: linear-gradient(#a9b9d3, #5b7298); border: 1px solid #c7d3e6; border-top: 0; border-radius: 0 0 2px 2px; }
.wbtns svg { width: 14px; height: 9px; }
.wbtns .close { width: 30px; background: linear-gradient(#c98479, #a83a2c); }

.menu { flex: none; height: 18px; display: flex; align-items: center; padding: 0 4px 0 3px; }
.menu .logo { margin: 0 6px 0 2px; }
.menu a { margin-right: 9px; }
.menu u { text-underline-offset: 1px; }
.ask { margin-left: auto; display: flex; width: 118px; height: 13px; background: #fff; }
.ask input { flex: 1; min-width: 0; padding-left: 2px; }
.ask input::placeholder { color: #777; }
.ask .a { background-color: #c9ddf9; }
.mdi { display: flex; gap: 4px; margin-left: 1px; }
.mdi button { width: 8px; height: 10px; }
.mdi svg { width: 6px; height: 6px; }

.bars { flex: none; height: 53px; display: flex; flex-direction: column; }
.row { display: flex; height: 18px; gap: 1px; padding-left: 3px; align-items: center; }
.bar { display: flex; align-items: center; height: 17px; background: linear-gradient(#e2edfc, #cde0fb 50%, #b2cff7); border-radius: 2px; }
.w1 { width: 502px; } .w2 { width: 200px; } .w3 { width: 123px; }
.w4 { width: 532px; margin-right: 48px; } .w5 { width: 106px; } .w6 { width: 122px; }
.w7 { width: 98px; } .w8 { width: 286px; } .w9 { width: 237px; }
.grip { width: 2px; height: 11px; background: repeating-linear-gradient(#5f7fb3 0 1px, transparent 1px 3px); margin-right: 1px; }
.b { width: 15px; height: 15px; }
.b svg { width: 12px; height: 12px; }
.on { background: linear-gradient(#fdc27b, #fba947); box-shadow: inset 0 0 0 1px #e5ad62; }
.t { font-weight: bold; font-size: 9px; color: #111; }
.it { font-style: italic; } .un { text-decoration: underline; }
.a { width: 7px; height: 13px; }
.w8 .a { width: 8px; }
.a::before, .more::before, .drop::before, .up::before, .down::before, .left::before, .right::before { content: ""; border: 2px solid transparent; border-top: 2px solid #111; border-bottom: 0; }
.s { width: 5px; height: 12px; background: linear-gradient(#9ab9e6, #9ab9e6) 2px 0 / 1px 100% no-repeat; }
.more { width: 8px; height: 17px; margin-left: auto; background: linear-gradient(#c9defa, #8eb3e8); border-radius: 0 3px 3px 0; align-items: flex-end; padding-bottom: 2px; }
.combo { display: flex; height: 14px; background: #fff; align-items: center; color: #111; flex: none; }
.combo input { flex: 1; min-width: 0; padding-left: 2px; }
.zoom { width: 44px; } .layer { width: 96px; background: #ebebe6; border: 1px solid #94a0b2; color: #8b8b88; margin-right: 1px; }
.font { width: 95px; margin-right: 1px; } .size { width: 60px; }
.themebtn { gap: 2px; width: 35px; margin-right: 1px; }
.themebtn svg { width: 12px; height: 12px; }

.work { flex: 1; min-height: 0; display: flex; }
.panel { width: 157px; flex: none; display: flex; flex-direction: column; border-left: 2px solid #a9cbf8; margin-right: 4px; padding-bottom: 1px; }
.phead { flex: none; height: 17px; display: flex; align-items: center; justify-content: space-between; padding: 0 2px 2px 4px; background: linear-gradient(#e4effd, #bcd6fb); color: #204f95; }
.x { width: 9px; height: 9px; font-family: "DejaVu Sans", sans-serif; font-size: 8px; color: #14264a; }
.search { flex: none; height: 31px; padding: 2px 5px 0; background: linear-gradient(#e9e9ec, #b9bac2); color: #111; font-size: 8px; }
.search label { display: block; padding-left: 2px; line-height: 11px; }
.srow { display: flex; align-items: center; height: 12px; }
.srow input { flex: 1; min-width: 0; height: 12px; background: #fff; padding-left: 1px; }
.drop { width: 11px; height: 12px; background: #eee; border: 1px solid #888; }
.go { width: 12px; height: 12px; background: #2c7c38; margin-left: 5px; }
.go svg { width: 10px; height: 10px; }
.st { height: 12px; justify-content: flex-start; gap: 2px; padding-left: 2px; background: linear-gradient(#f4f4f6, #cfcfd4); border-top: 1px solid #fff; border-bottom: 1px solid #aaabb2; color: #111; font-size: 7px; white-space: nowrap; overflow: hidden; }
.st::before { content: ""; width: 7px; height: 8px; flex: none; background: linear-gradient(#bfe6cb, #bfe6cb) 1px 3px / 5px 1px no-repeat, linear-gradient(#bfe6cb, #bfe6cb) 3px 1px / 1px 6px no-repeat, #189445; }
.stencil { flex: 1; min-height: 0; display: flex; background: #f5f6fa; padding-left: 1px; }
.shapes { flex: 1; display: grid; grid-template-columns: repeat(4, 1fr); grid-template-rows: repeat(11, 1fr); padding: 3px 4px 25px 0; text-align: center; font-family: "DejaVu Sans Condensed", "Noto Sans", sans-serif; font-size: 6px; line-height: 8px; color: #222; white-space: nowrap; }
.shapes li { display: block; min-width: 0; min-height: 0; }
.shapes svg { width: 24px; height: 20px; margin: 0 auto 2px; }
.vscroll { width: 10px; flex: none; display: flex; flex-direction: column; background: #eee; align-items: center; }
.up, .down { width: 10px; height: 10px; }
.up::before { border-top: 0; border-bottom: 3px solid #444; }
.vscroll .thumb { width: 9px; flex: 1; border: 1px solid #a4a4a8; border-radius: 1px; background: repeating-linear-gradient(#777 0 1px, transparent 1px 2px) center / 4px 5px no-repeat, linear-gradient(90deg, #f5f5f5, #c2c2c6); }
.stencil .down { margin-bottom: 2px; }

.doc { flex: 1; min-width: 0; display: grid; grid-template-columns: 11px minmax(0, 1fr) 13px; grid-template-rows: 10px minmax(0, 1fr) 12px; border-top: 1px solid #555; }
.corner { background: linear-gradient(#444, #444) 5px 0 / 1px 100% no-repeat, linear-gradient(#444, #444) 0 5px / 100% 1px no-repeat, #fff; border-right: 1px solid #444; border-bottom: 1px solid #444; }
.hruler { grid-row: 1; grid-column: 2; display: flex; overflow: hidden; padding-left: 35px; border-bottom: 1px solid #444; background: repeating-linear-gradient(90deg, #999 0 1px, transparent 1px 4px) 3px 6px / 100% 3px no-repeat, linear-gradient(#fff, #c9c9c9); }
.hruler span { flex: none; width: 40px; border-left: 1px solid #777; padding-left: 1px; line-height: 7px; font-size: 7px; color: #333; }
.vruler { grid-row: 2; display: flex; flex-direction: column; overflow: hidden; padding-top: 25px; border-right: 2px solid #555; background: repeating-linear-gradient(#999 0 1px, transparent 1px 4px) 6px 1px / 3px 100% no-repeat, linear-gradient(90deg, #fff, #c9c9c9); }
.vruler span { flex: none; width: 8px; height: 40px; writing-mode: vertical-rl; transform: rotate(180deg); text-align: right; border-bottom: 1px solid #777; line-height: 8px; font-size: 7px; color: #333; }
.canvas { grid-row: 2; grid-column: 2; position: relative; overflow: hidden; background: #fff; }
.draw { width: 100%; height: 100%; }
.big { font: 34px "Liberation Sans", Arial, sans-serif; text-anchor: middle; fill: #000; }
.vs2 { grid-column: 3; grid-row: 1 / 3; width: 13px; background: #efeff0; }
.vs2 .thumb { flex: none; height: 27px; margin: 219px 0 auto; width: 10px; }
.explorer { position: absolute; left: 1px; top: 0; width: 12px; height: 163px; display: flex; flex-direction: column; align-items: center; justify-content: space-between; padding: 2px 0; background: linear-gradient(90deg, #dfebfd, #c1d9fb); border: 1px solid #8eb2e4; color: #2450a0; }
.explorer span { writing-mode: vertical-rl; line-height: 10px; }
.data { position: absolute; right: 0; bottom: 0; width: 289px; height: 267px; display: grid; grid-template-columns: 1fr 13px; grid-template-rows: 1fr 12px; border: 1px solid #6989ba; padding: 1px; background: #b8d4fa; }
.dbody { background: #fff; display: flex; align-items: center; justify-content: center; color: #222; font-size: 7px; padding-left: 1px; }
.dtabs { grid-row: 2; display: flex; background: linear-gradient(90deg, #ddd, #bfd7f6); border-top: 1px solid #777; }
.tab { height: 10px; padding: 0 12px 0 5px; background: #aaacb0; clip-path: polygon(8px 0, 100% 0, calc(100% - 9px) 100%, 0 100%); font: bold 7px/9px "DejaVu Sans", sans-serif; color: #111; }
.tab.cur { background: #fff; clip-path: polygon(0 0, 100% 0, calc(100% - 9px) 100%, 0 100%); }
.dtabs .tab + .tab { margin-left: -7px; padding: 0 16px 0 10px; font: 7px/9px "Noto Sans", sans-serif; }
.dside { grid-column: 2; grid-row: 1 / 3; display: flex; flex-direction: column; align-items: center; background: linear-gradient(90deg, #e3edfd, #c5dbfb); padding-bottom: 1px; gap: 2px; }
.dside h2 { writing-mode: vertical-rl; flex: 1; padding-top: 2px; line-height: 12px; color: #2c4f88; }
.pin { width: 12px; height: 12px; background: #f5ad43; }
.pin svg { width: 9px; height: 9px; }
.foot { grid-column: 1 / 4; grid-row: 3; display: flex; background: #eeeef0; border-bottom: 1px solid #fff; }
.pages { flex: none; width: 543px; display: flex; background: #e9e9ed; border-top: 1px solid #888; border-right: 1px solid #666; }
.navs { width: 46px; height: 10px; background: #bbd8fd; border-right: 1px solid #555; }
.pages .tab { padding: 0 13px 0 4px; }
.hscroll { flex: 1; display: flex; align-items: center; padding-left: 2px; }
.left, .right { width: 8px; height: 10px; }
.left::before { border: 2px solid transparent; border-right: 3px solid #333; border-left: 0; }
.right::before { border: 2px solid transparent; border-left: 3px solid #333; border-right: 0; }
.hthumb { width: 28px; height: 10px; margin: 0 auto 0 180px; border: 1px solid #999; background: repeating-linear-gradient(90deg, #444 0 1px, transparent 1px 2px) center / 5px 4px no-repeat, linear-gradient(#f8f8f8, #bcbcc0); }
.size-grip { width: 13px; background: radial-gradient(circle, #999 1px, transparent 1px) 4px 4px / 3px 3px; clip-path: polygon(100% 30%, 100% 100%, 30% 100%); }
.rail { width: 18px; flex: none; padding: 2px 3px 0 2px; }
.railbar { background: linear-gradient(90deg, #e1ecfc, #b6d1f7); display: flex; flex-direction: column; align-items: center; height: 71px; border-radius: 2px; }
.hgrip { width: 10px; height: 1px; margin: 1px 0 0; background: repeating-linear-gradient(90deg, #5f7fb3 0 1px, transparent 1px 3px); }
.railbar .b { width: 13px; height: 15px; }
.red { filter: hue-rotate(-25deg) saturate(2); } .blue { filter: hue-rotate(150deg) saturate(.5); } .green { filter: hue-rotate(30deg); }
.rmore { width: 13px; height: 7px; font-size: 7px; line-height: 7px; background: #97baea; }
.status { flex: none; height: 15px; display: flex; align-items: center; border-top: 1px solid #e2eefd; color: #14264a; }
.status i { height: 11px; border-right: 2px solid #a5c7f3; }
.c1 { width: 124px; } .c2 { width: 121px; } .c3 { width: 127px; }
.status span { margin-left: auto; padding: 0 24px; margin-right: 3px; border: 1px solid #a9c9f5; border-bottom: 0; line-height: 11px; }
```
